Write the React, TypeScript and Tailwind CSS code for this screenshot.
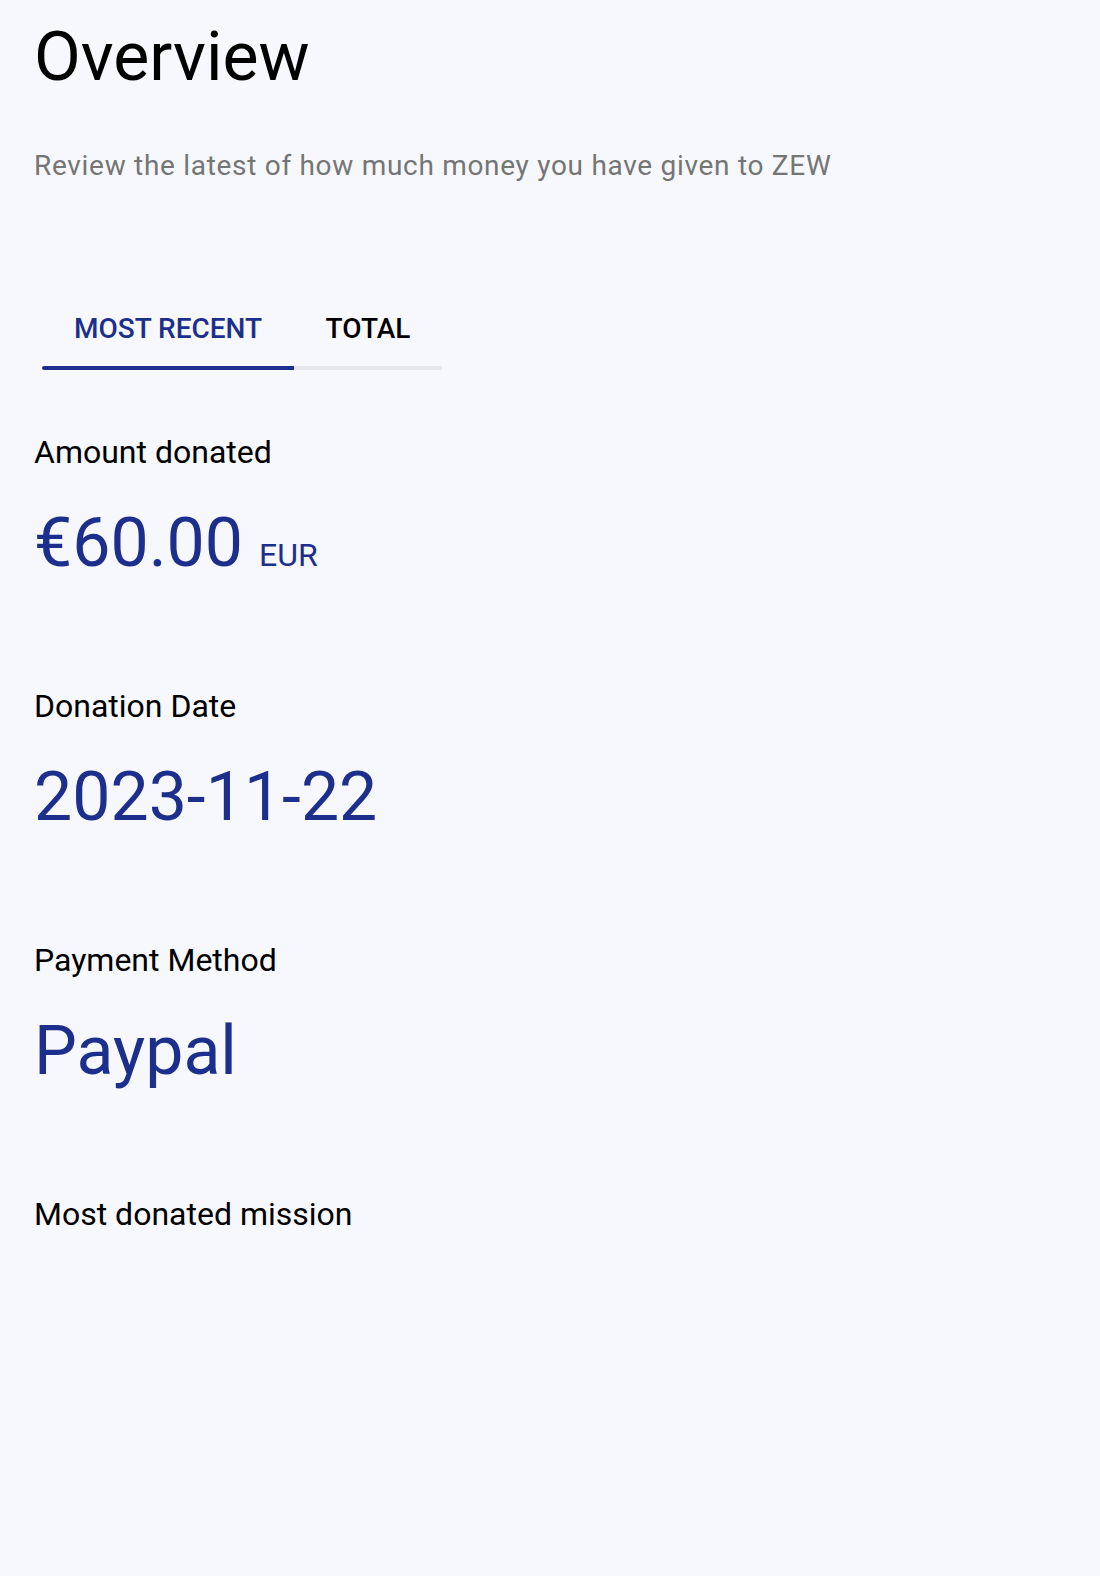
import { useState } from "react";

const tabs = ["Most recent", "Total"];

const stats = [
  { label: "Amount donated", value: "€60.00", unit: "EUR" },
  { label: "Donation Date", value: "2023-11-22" },
  { label: "Payment Method", value: "Paypal" },
];

export default function App() {
  const [active, setActive] = useState(0);

  return (
    <div className="min-h-screen bg-[#f7f8fd] px-[34px] pt-[23px] font-['Roboto',sans-serif] text-black">
      <h1 className="text-[68px] leading-[68px] font-normal">Overview</h1>
      <p className="mt-[55px] text-[28px] leading-[40px] tracking-[0.7px] text-[#757575]">
        Review the latest of how much money you have given to ZEW
      </p>

      {/* Tabs */}
      <div className="mt-[123px] ml-[8px] flex w-[400px]">
        {tabs.map((t, i) => (
          <button
            key={t}
            onClick={() => setActive(i)}
            className={`flex flex-col ${i === 0 ? "w-[252px]" : "w-[148px]"}`}
          >
            <span
              className={`whitespace-nowrap pb-[17px] text-[28px] leading-[40px] font-medium uppercase ${
                active === i ? "text-[#1c2f8c]" : "text-black"
              }`}
            >
              {t}
            </span>
            <span
              className={`h-1 w-full ${active === i ? "bg-[#1c2f8c]" : "bg-[#e6e7ec]"} ${
                i === 0 ? "rounded-l-full" : "rounded-r-full"
              }`}
            />
          </button>
        ))}
      </div>

      {/* Stats */}
      <div className="mt-[62px] flex flex-col gap-[103px]">
        {stats.map((s) => (
          <div key={s.label}>
            <div className="text-[32px] leading-[40px]">{s.label}</div>
            <div className="mt-[31px] flex items-baseline gap-4 text-[#1c2f8c]">
              <span className="text-[68px] leading-[80px]">{s.value}</span>
              {s.unit && <span className="text-[32px] leading-[40px]">{s.unit}</span>}
            </div>
          </div>
        ))}
        <div className="text-[32px] leading-[40px]">Most donated mission</div>
      </div>
    </div>
  );
}
